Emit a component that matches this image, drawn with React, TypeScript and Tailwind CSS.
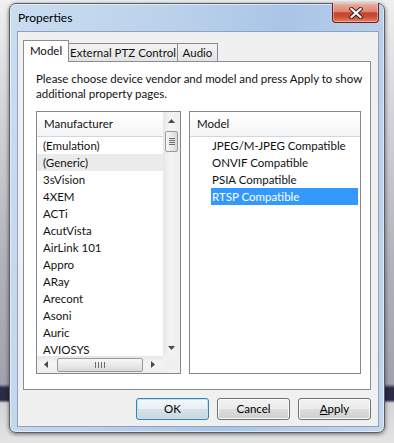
import React from 'react'

const manufacturers = [
  '(Emulation)',
  '(Generic)',
  '3sVision',
  '4XEM',
  'ACTi',
  'AcutVista',
  'AirLink 101',
  'Appro',
  'ARay',
  'Arecont',
  'Asoni',
  'Auric',
  'AVIOSYS',
]

const models = ['JPEG/M-JPEG Compatible', 'ONVIF Compatible', 'PSIA Compatible', 'RTSP Compatible']

function Arrow({ dir }: { dir: 'up' | 'down' | 'left' | 'right' }) {
  if (dir === 'up' || dir === 'down') {
    return (
      <svg width="7" height="4" viewBox="0 0 7 4">
        <polygon points={dir === 'up' ? '0,4 3.5,0 7,4' : '0,0 3.5,4 7,0'} fill="#4a4a4a" />
      </svg>
    )
  }
  return (
    <svg width="4" height="7" viewBox="0 0 4 7">
      <polygon points={dir === 'left' ? '4,0 0,3.5 4,7' : '0,0 4,3.5 0,7'} fill="#4a4a4a" />
    </svg>
  )
}

function Button({ children, primary }: { children: React.ReactNode; primary?: boolean }) {
  return (
    <div
      className={
        'w-[73px] h-[22px] rounded-[3px] border flex items-center justify-center text-[11.5px] text-black ' +
        (primary
          ? 'border-[#3c7fb1] bg-[linear-gradient(to_bottom,#f4f8fb_0%,#e8eef3_48%,#d6e0e8_52%,#cbd6df_100%)] shadow-[inset_0_0_0_1px_#bde5f8]'
          : 'border-[#707070] bg-[linear-gradient(to_bottom,#f2f2f2_0%,#ebebeb_48%,#dddddd_52%,#cfcfcf_100%)] shadow-[inset_0_0_0_1px_#fcfcfc]')
      }
    >
      {children}
    </div>
  )
}

function ListHeader({ title }: { title: string }) {
  return (
    <div className="h-[25px] shrink-0 flex items-center pl-[7px] border-b border-[#d5d5d5] bg-[linear-gradient(to_bottom,#ffffff,#f4f5f7)] text-[11.5px]">
      {title}
    </div>
  )
}

export default function App() {
  return (
    <div className="w-[394px] h-[443px] overflow-hidden pl-[9px] pt-[3px] font-['Lato',sans-serif] text-[#111] bg-[linear-gradient(to_bottom,#f0f0f0_0px,#d2d2d6_120px,#b2b2ba_260px,#a2a2ae_384px,#2b2b45_388px,#2b2b45_400px,#d4d4d4_403px,#e4e4e4_443px)]">
      {/* window */}
      <div className="relative w-[376px] h-[430px] rounded-[7px] border border-[#55606e] bg-[linear-gradient(100deg,#cadcf0_0%,#bcd2eb_35%,#a9c5e7_62%,#c3d6ed_100%)] shadow-[0_1px_4px_rgba(0,0,0,0.55),inset_0_0_0_1px_rgba(255,255,255,0.55)] flex flex-col">
        {/* title bar */}
        <div className="h-[27px] shrink-0 flex items-center pl-[8px] text-[12px] text-black">Properties</div>
        <div className="absolute top-[-1px] right-[5px] w-[47px] h-[20px] rounded-b-[4px] border border-[#6a2418] border-t-0 bg-[linear-gradient(to_bottom,#eab0a3_0%,#dc8670_45%,#c4442e_52%,#cc4f36_75%,#e4856a_100%)] shadow-[inset_0_0_0_1px_rgba(255,220,210,0.45)] flex items-center justify-center">
          <svg width="14" height="12" viewBox="0 0 14 12">
            <path d="M2.5 2 L11.5 10 M11.5 2 L2.5 10" stroke="#4a1a14" strokeWidth="4.2" strokeLinecap="square" />
            <path d="M2.5 2 L11.5 10 M11.5 2 L2.5 10" stroke="#ffffff" strokeWidth="2.2" strokeLinecap="square" />
          </svg>
        </div>

        {/* client area */}
        <div className="ml-[7px] w-[362px] h-[396px] border border-[#8da2bd] bg-[#f0f0f0] flex flex-col">
          {/* tabs */}
          <div className="ml-[5px] mt-[8px] h-[21px] flex items-end text-[11.5px] whitespace-nowrap">
            <div className="relative z-10 -mb-px w-[46px] h-[22px] border border-b-0 border-[#898c95] bg-white flex items-center justify-center pb-[2px]">
              Model
            </div>
            <div className="w-[109px] h-[18px] border border-l-0 border-b-0 border-[#898c95] bg-[linear-gradient(to_bottom,#f3f3f3,#e3e3e3)] flex items-center justify-center">
              External PTZ Control
            </div>
            <div className="w-[40px] h-[18px] border border-l-0 border-b-0 border-[#898c95] bg-[linear-gradient(to_bottom,#f3f3f3,#e3e3e3)] flex items-center justify-center">
              Audio
            </div>
          </div>

          {/* tab panel */}
          <div className="ml-[5px] w-[348px] h-[329px] border border-[#898c95] bg-white pl-[12px] pr-[9px] pt-[9px] flex flex-col">
            <div className="text-[11.5px] leading-[15px] whitespace-nowrap">
              Please choose device vendor and model and press Apply to show
              <br />
              additional property pages.
            </div>

            <div className="mt-[10px] flex gap-[8px]">
              {/* manufacturer list */}
              <div className="w-[145px] h-[263px] border border-[#828790] flex">
                <div className="w-[126px] flex flex-col">
                  <ListHeader title="Manufacturer" />
                  <div className="flex-1 overflow-hidden">
                    {manufacturers.map((m, i) => (
                      <div
                        key={m}
                        className={'h-[17px] flex items-center pl-[6px] text-[11.5px] ' + (i === 1 ? 'bg-[#ebebeb]' : '')}
                      >
                        {m}
                      </div>
                    ))}
                  </div>
                  {/* horizontal scrollbar */}
                  <div className="h-[17px] shrink-0 flex items-center bg-[linear-gradient(to_bottom,#e6e6e6,#f4f4f4_40%,#eeeeee)]">
                    <div className="w-[17px] h-full flex items-center justify-center">
                      <Arrow dir="left" />
                    </div>
                    <div className="ml-[3px] w-[86px] h-[14px] rounded-[2px] border border-[#9a9a9a] bg-[linear-gradient(to_bottom,#f6f6f6,#e9e9e9_50%,#d8d8d8)] flex items-center justify-center gap-[2px]">
                      <div className="w-px h-[6px] bg-[#6e6e6e]" />
                      <div className="w-px h-[6px] bg-[#6e6e6e]" />
                      <div className="w-px h-[6px] bg-[#6e6e6e]" />
                      <div className="w-px h-[6px] bg-[#6e6e6e]" />
                    </div>
                    <div className="flex-1 h-full flex items-center justify-center">
                      <Arrow dir="right" />
                    </div>
                  </div>
                </div>
                {/* vertical scrollbar */}
                <div className="w-[17px] flex flex-col">
                  <div className="flex-1 flex flex-col bg-[linear-gradient(to_right,#e6e6e6,#f4f4f4_40%,#eeeeee)]">
                    <div className="h-[17px] flex items-center justify-center">
                      <Arrow dir="up" />
                    </div>
                    <div className="mt-[2px] mx-[2px] h-[21px] rounded-[2px] border border-[#9a9a9a] bg-[linear-gradient(to_right,#f6f6f6,#e9e9e9_50%,#d8d8d8)] flex flex-col items-center justify-center gap-[1px]">
                      <div className="w-[6px] h-px bg-[#6e6e6e]" />
                      <div className="w-[6px] h-px bg-[#6e6e6e]" />
                      <div className="w-[6px] h-px bg-[#6e6e6e]" />
                      <div className="w-[6px] h-px bg-[#6e6e6e]" />
                    </div>
                    <div className="flex-1" />
                    <div className="h-[17px] flex items-center justify-center">
                      <Arrow dir="down" />
                    </div>
                  </div>
                  <div className="h-[17px] bg-[#f0f0f0]" />
                </div>
              </div>

              {/* model list */}
              <div className="w-[172px] h-[263px] border border-[#828790] flex flex-col">
                <ListHeader title="Model" />
                <div>
                  {models.map((m, i) => (
                    <div
                      key={m}
                      className={
                        'h-[17px] ml-[21px] mr-[2px] flex items-center pl-[1px] text-[11.5px] ' +
                        (i === 3 ? 'bg-[#3399ff] text-white' : '')
                      }
                    >
                      {m}
                    </div>
                  ))}
                </div>
              </div>
            </div>
          </div>

          {/* buttons */}
          <div className="mt-[8px] ml-[118px] flex gap-[8px]">
            <Button primary>OK</Button>
            <Button>Cancel</Button>
            <Button>
              <span>
                <span className="underline">A</span>pply
              </span>
            </Button>
          </div>
        </div>
      </div>
    </div>
  )
}
